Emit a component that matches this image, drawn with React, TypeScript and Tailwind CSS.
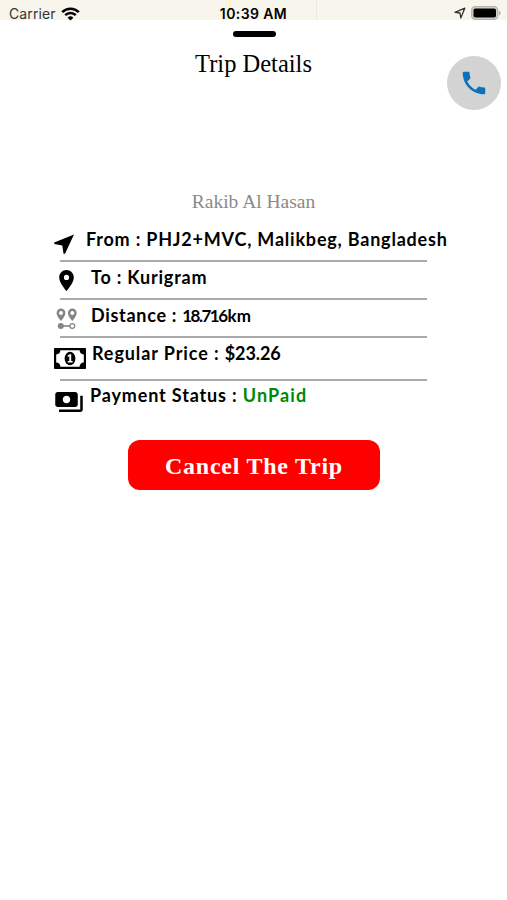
import type { ReactNode } from 'react';
import { MdLocationOn, MdPayments, MdPhone } from 'react-icons/md';

interface DetailRowProps {
  icon: ReactNode;
  className: string;
  textClassName: string;
  children: ReactNode;
}

function StatusBar() {
  return (
    <div className="grid h-5 grid-cols-3 bg-[#f8f5ec] font-['Inter',sans-serif] text-black">
      <div className="flex h-5 items-center pl-[9px] pt-[7px]">
        <span className="text-[14px] leading-[14px] tracking-[0.1px] text-[#333]">Carrier</span>
        <svg className="ml-[5px] h-[14px] w-[19px] shrink-0" viewBox="0 0 19 14" fill="none" stroke="#000">
          <path d="M1.2 5.1a11.8 11.8 0 0 1 16.6 0" strokeWidth="2.6" />
          <path d="M4.2 8.2a7.5 7.5 0 0 1 10.6 0" strokeWidth="2.5" />
          <path d="M9.5 13.6L6.6 10.7a4.1 4.1 0 0 1 5.8 0z" fill="#000" stroke="none" />
        </svg>
      </div>
      {/* Map roads showing through the bar */}
      <div className="flex h-5 items-center justify-center bg-[linear-gradient(90deg,transparent_57px,#fbefc4_57px,#fdf9e8_59px,#fbefc4_62px,transparent_62px,transparent_144px,#ebe7dc_144px,#fffdf6_145px,#ebe7dc_148px,transparent_148px)] pt-[7px]">
        <span className="whitespace-nowrap text-[14px] font-semibold leading-[14px] tracking-[0.4px]">
          10:39 AM
        </span>
      </div>
      <div className="flex h-5 items-center justify-end pr-[6px] pt-[6px]">
        <svg className="mr-[5px] h-3 w-3" viewBox="0 0 12 12" fill="none">
          <path d="M1 5.4L10.8 1.2 6.8 11 6 6z" stroke="#333" strokeWidth="1.3" strokeLinejoin="round" />
        </svg>
        <svg className="h-[14px] w-[30px]" viewBox="0 0 30 14">
          <rect x="0.7" y="0.7" width="26" height="12.6" rx="3.6" fill="#d6d4cc" stroke="#b5b3aa" strokeWidth="1.3" />
          <rect x="2.5" y="2.5" width="22.5" height="9" rx="1.8" fill="#000" />
          <path d="M28 4.7c2 .6 2 4 0 4.6z" fill="#aaa89f" />
        </svg>
      </div>
    </div>
  );
}

function ArrowIcon() {
  return (
    <svg className="ml-[-6px] mt-[9px] h-5 w-5 shrink-0" viewBox="0 0 20 20">
      <path d="M20 .4L.2 8.6v1.4l8.1 1.5 1.2 8.2H11z" fill="#000" />
    </svg>
  );
}

function DistanceIcon() {
  return (
    <svg className="ml-[-5px] mt-2 h-[22px] w-[23px] shrink-0" viewBox="0 0 23 22" fill="#858585">
      <path
        fillRule="evenodd"
        d="M6 .5a4.4 4.4 0 0 0-4.4 4.4C1.6 8.1 6 12.9 6 12.9s4.4-4.8 4.4-8A4.4 4.4 0 0 0 6 .5zm0 2.4a2 2 0 1 1 0 4 2 2 0 0 1 0-4z"
      />
      <path
        fillRule="evenodd"
        d="M17.3.5a4.4 4.4 0 0 0-4.4 4.4c0 3.2 4.4 8 4.4 8s4.4-4.8 4.4-8A4.4 4.4 0 0 0 17.3.5zm0 2.4a2 2 0 1 1 0 4 2 2 0 0 1 0-4z"
      />
      <circle cx="5.8" cy="18" r="3" />
      <path d="M6 17.2h9v1.6H6z" />
      <circle cx="17.3" cy="18" r="2.4" fill="none" stroke="#858585" strokeWidth="1.3" />
    </svg>
  );
}

function BanknoteIcon() {
  return (
    <svg className="ml-[-6px] mt-[10px] h-[21px] w-8 shrink-0" viewBox="0 0 32 21">
      <rect width="32" height="21" rx="0.8" fill="#000" />
      <path d="M6.4 2.2h19.2a4.4 4.4 0 0 0 4.2 4.2v8.2a4.4 4.4 0 0 0-4.2 4.2H6.4a4.4 4.4 0 0 0-4.2-4.2V6.4a4.4 4.4 0 0 0 4.2-4.2z" fill="#fff" />
      <ellipse cx="16" cy="10.5" rx="5.4" ry="6.7" fill="#000" />
      <path d="M13.7 7.6l2-1.3h1.5v6.8h1.4v1.5h-4.9v-1.5h1.6V8.3l-1.6.7z" fill="#fff" />
    </svg>
  );
}

function DetailRow({ icon, className, textClassName, children }: DetailRowProps) {
  return (
    <div className={`flex items-start border-[#aaa] ${className}`}>
      {icon}
      <p className={`whitespace-nowrap font-['Lato',sans-serif] text-[18px] font-bold leading-6 text-black ${textClassName}`}>
        {children}
      </p>
    </div>
  );
}

export default function App() {
  return (
    <div className="flex h-[900px] w-[507px] flex-col overflow-hidden bg-white">
      <StatusBar />

      {/* Sheet handle */}
      <div className="ml-[233px] mt-[11px] h-[6px] w-[43px] rounded-full bg-black" />

      <header className="grid h-[73px] grid-cols-[1fr_auto_1fr] items-start">
        <h1 className="col-start-2 mt-[12px] font-['Liberation_Serif',serif] text-[24.5px] leading-[30px] text-black">
          Trip Details
        </h1>
        <button className="mr-[6px] mt-[19px] flex size-[54px] items-center justify-center justify-self-end rounded-full bg-[#d3d3d3]">
          <MdPhone className="size-[30px] text-[#0a72bd]" />
        </button>
      </header>

      <h2 className="mt-[80px] text-center font-['Liberation_Serif',serif] text-[19.5px] leading-6 text-[#8a8a8a]">
        Rakib Al Hasan
      </h2>

      <section className="ml-[60px] mt-[11px] w-[367px]">
        <DetailRow icon={<ArrowIcon />} className="h-[37px] border-b-2" textClassName="ml-[12px] mt-[2px] tracking-[0.79px]">
          From : PHJ2+MVC, Malikbeg, Bangladesh
        </DetailRow>
        <DetailRow
          icon={<MdLocationOn className="ml-[-6px] mt-[6px] size-[25px] shrink-0" />}
          className="h-[38px] border-b-2"
          textClassName="ml-[12px] mt-[3px] tracking-[0.8px]"
        >
          To : Kurigram
        </DetailRow>
        <DetailRow icon={<DistanceIcon />} className="h-[38px] border-b-2" textClassName="ml-[13px] mt-[3px] tracking-[0.7px]">
          Distance : <span className="text-[17px] tracking-[-1.5px]">18.716</span>
          <span className="ml-px text-[17px] tracking-normal">km</span>
        </DetailRow>
        <DetailRow icon={<BanknoteIcon />} className="h-[43px] border-b-2" textClassName="ml-[6px] mt-[3px] tracking-[0.9px]">
          Regular Price : <span className="tracking-[-0.1px]">$23.26</span>
        </DetailRow>
        <DetailRow
          icon={<MdPayments className="ml-[-6px] mt-[6px] size-[30px] shrink-0" />}
          className="h-[59px]"
          textClassName="ml-[6px] mt-[2px] tracking-[0.85px]"
        >
          Payment Status : <span className="tracking-[1.1px] text-[#008a00]">UnPaid</span>
        </DetailRow>
      </section>

      <button className="ml-[128px] h-[50px] w-[252px] rounded-[12px] bg-[#ff0000] pt-[2px] font-['Liberation_Serif',serif] text-[24px] font-bold leading-none tracking-[0.75px] text-white">
        Cancel The Trip
      </button>
    </div>
  );
}
